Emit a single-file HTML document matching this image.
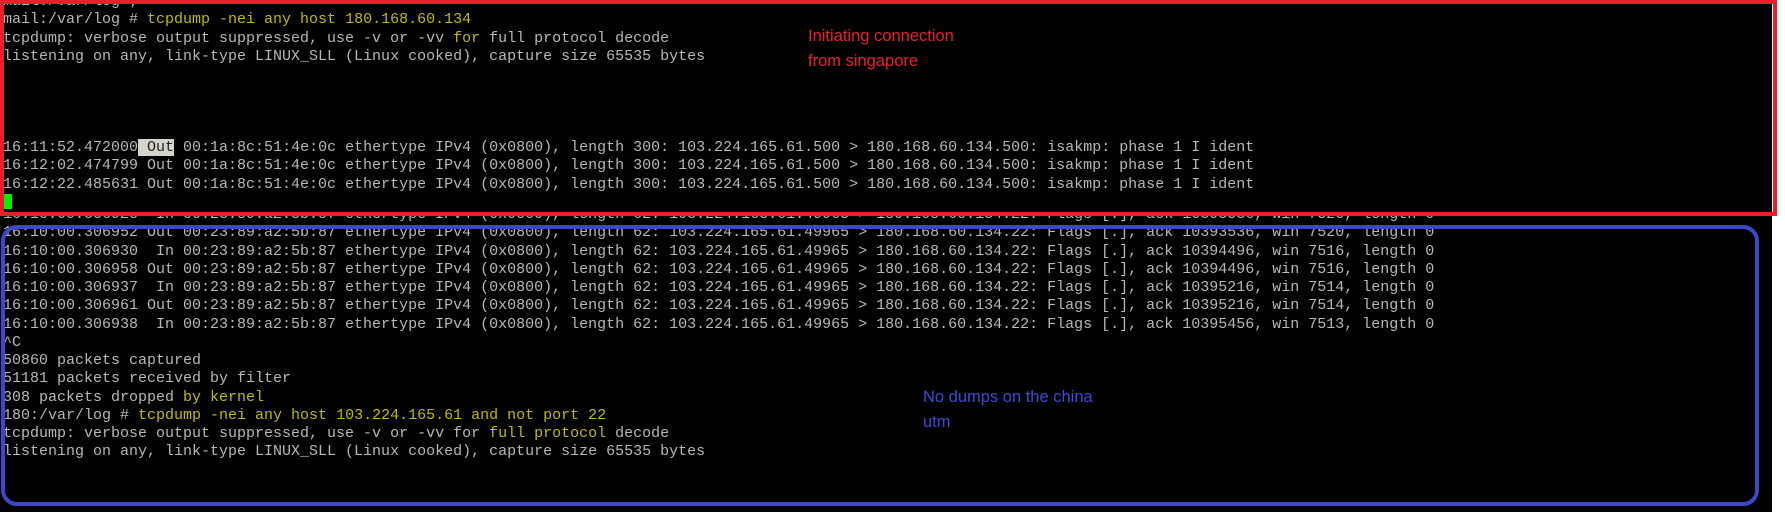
<!DOCTYPE html>
<html><head><meta charset="utf-8"><style>
html,body{margin:0;padding:0;background:#fff;}
body{width:1785px;height:522px;position:relative;overflow:hidden;}
#bg{position:absolute;left:0;top:0;width:1772px;height:512px;background:#000;}
pre{margin:0;position:absolute;left:3px;font-family:"Liberation Mono",monospace;font-size:15px;line-height:18.27px;color:#b8b8b8;white-space:pre;}
.y{color:#c0bc00;}
.hl{background:#d4d4cc;color:#222;}
#clip{position:absolute;left:0;top:214px;width:1772px;height:298px;overflow:hidden;}
#red{position:absolute;left:0;top:0;width:1777px;height:216px;border:4px solid #e8202a;box-sizing:border-box;}
#blue{position:absolute;left:1px;top:225px;width:1758px;height:281px;border:4px solid #3d48c8;border-radius:16px;box-sizing:border-box;}
.note{position:absolute;font-family:"Liberation Sans",sans-serif;font-size:16.5px;line-height:25px;}
</style></head><body>
<div id="bg"></div>
<pre style="top:-7px">mail:/var/log ;
mail:/var/log # <span class="y">tcpdump -nei any host 180.168.60.134</span>
tcpdump: verbose output suppressed, use -v or -vv <span class="y">for</span> full protocol decode
listening on any, link-type LINUX_SLL (Linux cooked), capture size 65535 bytes




16:11:52.472000<span class="hl"> Out</span> 00:1a:8c:51:4e:0c ethertype IPv4 (0x0800), length 300: 103.224.165.61.500 &gt; 180.168.60.134.500: isakmp: phase 1 I ident
16:12:02.474799 Out 00:1a:8c:51:4e:0c ethertype IPv4 (0x0800), length 300: 103.224.165.61.500 &gt; 180.168.60.134.500: isakmp: phase 1 I ident
16:12:22.485631 Out 00:1a:8c:51:4e:0c ethertype IPv4 (0x0800), length 300: 103.224.165.61.500 &gt; 180.168.60.134.500: isakmp: phase 1 I ident</pre>
<div style="position:absolute;left:4px;top:194px;width:8px;height:15px;background:#00f000"></div>
<div id="clip">
<pre style="top:-8px">16:10:00.306928  In 00:23:89:a2:5b:87 ethertype IPv4 (0x0800), length 62: 103.224.165.61.49965 &gt; 180.168.60.134.22: Flags [.], ack 10393536, win 7520, length 0
16:10:00.306952 Out 00:23:89:a2:5b:87 ethertype IPv4 (0x0800), length 62: 103.224.165.61.49965 &gt; 180.168.60.134.22: Flags [.], ack 10393536, win 7520, length 0
16:10:00.306930  In 00:23:89:a2:5b:87 ethertype IPv4 (0x0800), length 62: 103.224.165.61.49965 &gt; 180.168.60.134.22: Flags [.], ack 10394496, win 7516, length 0
16:10:00.306958 Out 00:23:89:a2:5b:87 ethertype IPv4 (0x0800), length 62: 103.224.165.61.49965 &gt; 180.168.60.134.22: Flags [.], ack 10394496, win 7516, length 0
16:10:00.306937  In 00:23:89:a2:5b:87 ethertype IPv4 (0x0800), length 62: 103.224.165.61.49965 &gt; 180.168.60.134.22: Flags [.], ack 10395216, win 7514, length 0
16:10:00.306961 Out 00:23:89:a2:5b:87 ethertype IPv4 (0x0800), length 62: 103.224.165.61.49965 &gt; 180.168.60.134.22: Flags [.], ack 10395216, win 7514, length 0
16:10:00.306938  In 00:23:89:a2:5b:87 ethertype IPv4 (0x0800), length 62: 103.224.165.61.49965 &gt; 180.168.60.134.22: Flags [.], ack 10395456, win 7513, length 0
^C
50860 packets captured
51181 packets received by filter
308 packets dropped <span class="y">by kernel</span>
180:/var/log # <span class="y">tcpdump -nei any host 103.224.165.61 and not port 22</span>
tcpdump: verbose output suppressed, use -v or -vv for <span class="y">full protocol</span> decode
listening on any, link-type LINUX_SLL (Linux cooked), capture size 65535 bytes</pre>
</div>
<div id="red"></div>
<div id="blue"></div>
<div class="note" style="left:808px;top:24px;color:#e8202a">Initiating connection<br>from singapore</div>
<div class="note" style="left:923px;top:385px;color:#3d4ad4">No dumps on the china<br>utm</div>
</body></html>
